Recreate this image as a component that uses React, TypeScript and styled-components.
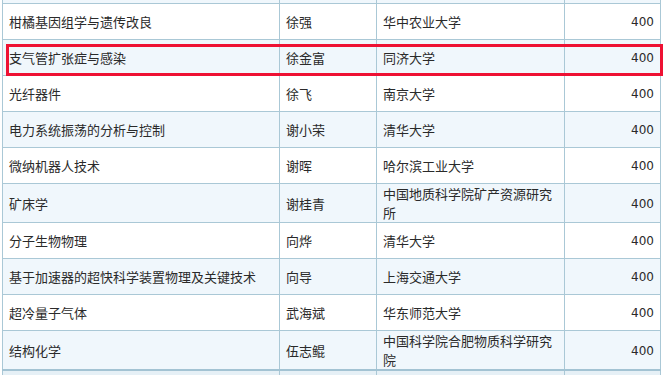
import React from 'react';
import styled, { createGlobalStyle } from 'styled-components';

type Row = { subject: string; name: string; school: string; amount: number };

const rows: Row[] = [
  { subject: '柑橘基因组学与遗传改良', name: '徐强', school: '华中农业大学', amount: 400 },
  { subject: '支气管扩张症与感染', name: '徐金富', school: '同济大学', amount: 400 },
  { subject: '光纤器件', name: '徐飞', school: '南京大学', amount: 400 },
  { subject: '电力系统振荡的分析与控制', name: '谢小荣', school: '清华大学', amount: 400 },
  { subject: '微纳机器人技术', name: '谢晖', school: '哈尔滨工业大学', amount: 400 },
  { subject: '矿床学', name: '谢桂青', school: '中国地质科学院矿产资源研究所', amount: 400 },
  { subject: '分子生物物理', name: '向烨', school: '清华大学', amount: 400 },
  { subject: '基于加速器的超快科学装置物理及关键技术', name: '向导', school: '上海交通大学', amount: 400 },
  { subject: '超冷量子气体', name: '武海斌', school: '华东师范大学', amount: 400 },
  { subject: '结构化学', name: '伍志鲲', school: '中国科学院合肥物质科学研究院', amount: 400 },
];

export default function App() {
  return (
    <>
      <GlobalStyle />
      <Page>
        <Table>
          <colgroup>
            <col style={{ width: 277 }} />
            <col style={{ width: 97 }} />
            <col style={{ width: 188 }} />
            <col style={{ width: 96 }} />
          </colgroup>
          <tbody>
            <TableRow $shaded>
              <Cell /><Cell /><Cell /><Cell />
            </TableRow>
            {rows.map((r, i) => (
              <TableRow key={r.subject} $shaded={i % 2 === 1}>
                <Cell>{r.subject}</Cell>
                <Cell>{r.name}</Cell>
                <Cell>{r.school}</Cell>
                <NumCell>{r.amount}</NumCell>
              </TableRow>
            ))}
            <EdgeRow>
              <Cell /><Cell /><Cell /><Cell />
            </EdgeRow>
          </tbody>
        </Table>
        <Highlight />
      </Page>
    </>
  );
}

const GlobalStyle = createGlobalStyle`
  html, body {
    margin: 0;
    padding: 0;
    background: #ffffff;
    overflow: hidden;
  }
`;

const Page = styled.div`
  position: relative;
  width: 663px;
  height: 375px;
  overflow: hidden;
  padding-left: 2px;
  box-sizing: border-box;
`;

const Table = styled.table`
  border-collapse: collapse;
  table-layout: fixed;
  width: 659px;
  margin-top: -33px;
  font-family: "Noto Sans CJK SC", "Noto Sans", sans-serif;
  font-size: 13px;
  color: #2a2a2a;
`;

const TableRow = styled.tr<{ $shaded?: boolean }>`
  background: ${p => (p.$shaded ? '#f0f7fc' : '#ffffff')};
`;

const EdgeRow = styled.tr`
  background: #e6f0f6;
  td {
    border-top: 2px solid #a3c3d3;
  }
`;

const Cell = styled.td`
  border: 1px solid #aac8d6;
  height: 35px;
  box-sizing: content-box;
  padding: 0 6px;
  line-height: 19px;
  vertical-align: middle;
  text-align: left;
`;

const NumCell = styled(Cell)`
  text-align: right;
  font-family: "DejaVu Sans", sans-serif;
  font-size: 12px;
  padding-top: 2px;
  height: 33px;
  padding-right: 6px;
`;

const Highlight = styled.div`
  position: absolute;
  left: 6px;
  top: 44px;
  width: 657px;
  height: 32px;
  border: 3px solid #ee1133;
  box-sizing: border-box;
  pointer-events: none;
`;
